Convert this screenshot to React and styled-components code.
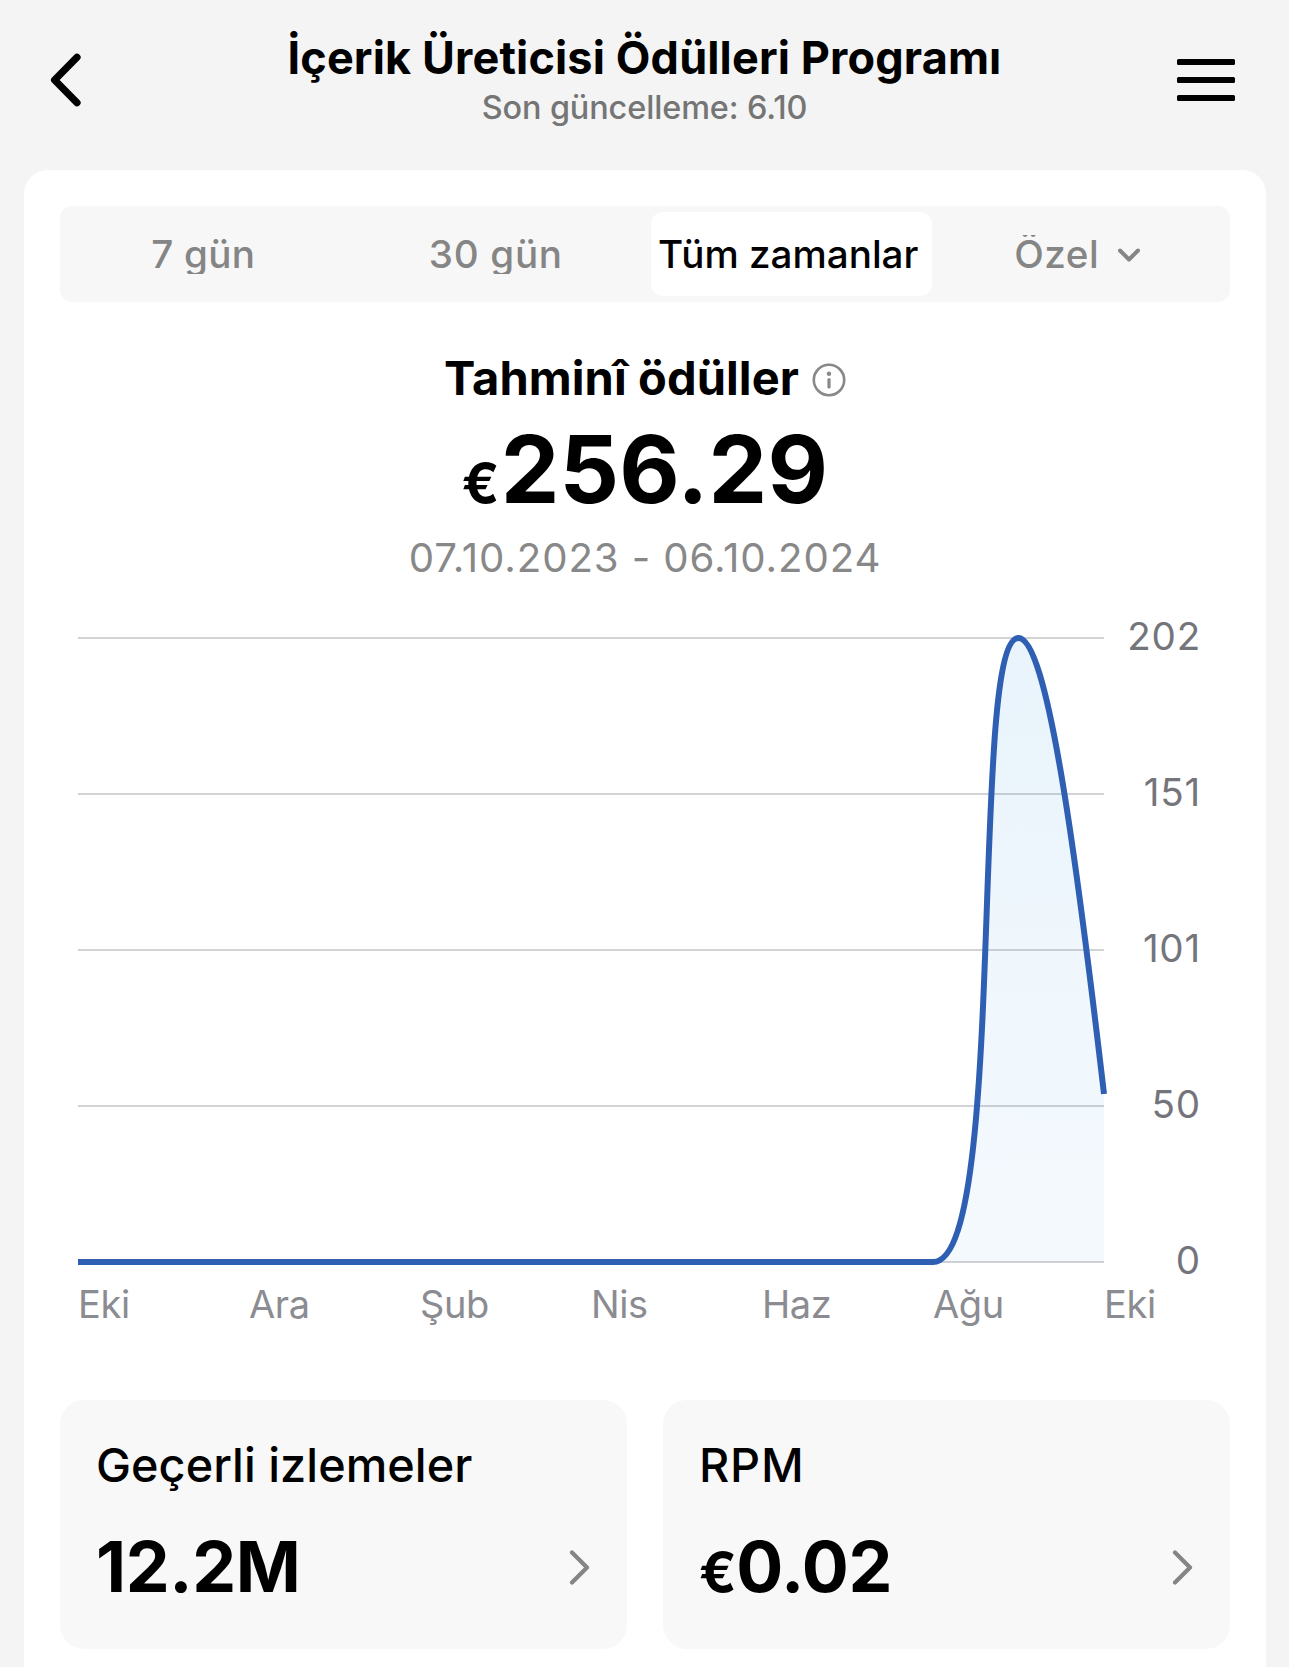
import React from "react";
import styled, { createGlobalStyle } from "styled-components";

const Global = createGlobalStyle`
  * { box-sizing: border-box; }
  body {
    margin: 0;
    background: #f4f4f4;
    color: #000;
    font-family: Inter, "Liberation Sans", sans-serif;
  }
`;

const Screen = styled.div`
  display: flex;
  flex-direction: column;
  width: 1289px;
  height: 1667px;
  overflow: hidden;
`;

const Header = styled.header`
  display: grid;
  grid-template-columns: 112px 1fr 112px;
  flex: none;
  height: 170px;
`;

const IconButton = styled.button`
  display: flex;
  align-items: flex-start;
  justify-content: ${(p) => (p.$end ? "flex-end" : "flex-start")};
  padding: 52px ${(p) => (p.$end ? "53px 0 0" : "0 0 48px")};
  border: 0;
  background: none;
  svg { flex: none; }
`;

const Heading = styled.div`
  padding-top: 32px;
  text-align: center;
  white-space: nowrap;
`;

const Title = styled.h1`
  margin: 0 0 5px;
  font-size: 45px;
  line-height: 52px;
  font-weight: 700;
  letter-spacing: 0.14px;
`;

const Updated = styled.p`
  margin: 0;
  color: #757575;
  font-size: 32.4px;
  line-height: 38px;
  font-weight: 500;
  letter-spacing: -0.1px;
`;

const Panel = styled.main`
  flex: 1;
  margin: 0 23px 0 24px;
  padding: 36px 36px 0;
  border-radius: 24px 24px 0 0;
  background: #fff;
`;

const Tabs = styled.nav`
  display: grid;
  grid-template-columns: repeat(4, 1fr);
  height: 96px;
  border-radius: 12px;
  background: #f7f7f7;
`;

const Tab = styled.button`
  display: flex;
  align-items: center;
  justify-content: center;
  gap: 18px;
  margin: 6px;
  padding: 1px ${(p) => p.$inset || 6}px 0 0;
  border: 0;
  border-radius: 12px;
  background: ${(p) => (p.$active ? "#fff" : "transparent")};
  color: ${(p) => (p.$active ? "#000" : "#858585")};
  font-family: inherit;
  font-size: 38.6px;
  font-weight: 500;
  letter-spacing: ${(p) => p.$spacing}px;
  white-space: nowrap;
`;

const TabLabel = styled.span`
  height: 39px;
  line-height: 39px;
  overflow: hidden;
`;

const Summary = styled.section`
  display: flex;
  flex-direction: column;
  align-items: center;
  padding-top: 48px;
`;

const SummaryTitle = styled.h2`
  display: flex;
  align-items: center;
  gap: 13px;
  margin: 0 0 13px;
  font-size: 47px;
  line-height: 56px;
  font-weight: 700;
  letter-spacing: 0.1px;
  svg { margin-top: 4px; }
`;

const Amount = styled.div`
  display: flex;
  align-items: baseline;
  font-size: 93.2px;
  line-height: 100px;
  font-weight: 700;
  letter-spacing: 0.2px;
`;

const Currency = styled.span`
  margin-right: ${(p) => p.$gap}px;
  font-size: 55px;
  line-height: 1;
`;

const Period = styled.p`
  margin: 15px 0 0;
  color: #888;
  font-size: 40.2px;
  line-height: 48px;
  letter-spacing: 0.9px;
`;

const Chart = styled.figure`
  margin: 34px 0 0;
  padding-left: 18px;
`;

const Plot = styled.div`
  display: flex;
  justify-content: space-between;
  height: 664px;
  padding-right: 29px;
  svg { flex: none; margin-top: 14px; }
`;

const Values = styled.div`
  display: flex;
  flex-direction: column;
  justify-content: space-between;
  color: #74757b;
  font-size: 38.6px;
  line-height: 40px;
  letter-spacing: 0.8px;
  text-align: right;
`;

const Months = styled.div`
  display: grid;
  grid-template-columns: repeat(6, 171px) auto;
  margin-top: 2px;
  color: #8b8c91;
  font-size: 38px;
  line-height: 44px;
  letter-spacing: -0.4px;
`;

const Cards = styled.section`
  display: grid;
  grid-template-columns: 1fr 1fr;
  gap: 36px;
  margin-top: 74px;
`;

const Card = styled.article`
  height: 249px;
  padding: 37px 36px 0;
  border-radius: 24px;
  background: #f8f8f8;
`;

const CardTitle = styled.h3`
  margin: 0 0 34px;
  font-size: 46.8px;
  line-height: 56px;
  font-weight: 500;
  letter-spacing: ${(p) => p.$spacing}px;
`;

const CardRow = styled.div`
  display: flex;
  align-items: center;
  justify-content: space-between;
`;

const CardValue = styled.div`
  display: flex;
  align-items: baseline;
  font-size: 69.8px;
  line-height: 80px;
  font-weight: 700;
  letter-spacing: -0.4px;
`;

const TABS = [
  { label: "7 gün", spacing: 0.3 },
  { label: "30 gün", spacing: 0.7 },
  { label: "Tüm zamanlar", spacing: 0 },
  { label: "Özel", spacing: 0.5, inset: 12, menu: true },
];
const ACTIVE_TAB = "Tüm zamanlar";

const CARDS = [
  { title: "Geçerli izlemeler", value: "12.2M", spacing: 0.05 },
  { title: "RPM", currency: "€", value: "0.02", spacing: 0.8 },
];

const VALUES = [202, 151, 101, 50, 0];
const MONTHS = ["Eki", "Ara", "Şub", "Nis", "Haz", "Ağu", "Eki"];
const GRID_Y = [8, 164, 320, 476, 632];

// Monthly curve: flat until August, peak in September, partial October.
const CURVE = "M0 632H855C930 632 891 8 940.5 8C969 8 997.5 220 1026 464";

const BackIcon = () => (
  <svg width="36" height="56" viewBox="0 0 36 56" fill="none">
    <path d="M29 5.2L6.6 28L29 50.8" stroke="#000" strokeWidth="7.2" strokeLinecap="round" strokeLinejoin="round" />
  </svg>
);

const MenuIcon = () => (
  <svg width="60" height="56" viewBox="0 0 60 56">
    <rect x="1" y="7" width="58" height="6" rx="1.5" />
    <rect x="1" y="25" width="58" height="6" rx="1.5" />
    <rect x="1" y="43" width="58" height="6" rx="1.5" />
  </svg>
);

const DownIcon = () => (
  <svg width="24" height="16" viewBox="0 0 24 16" fill="none">
    <path d="M3 3.5L12 12.5L21 3.5" stroke="#858585" strokeWidth="4" strokeLinecap="round" strokeLinejoin="round" />
  </svg>
);

const InfoIcon = () => (
  <svg width="34" height="34" viewBox="0 0 34 34" fill="none">
    <circle cx="17" cy="17" r="15.2" stroke="#888" strokeWidth="2.6" />
    <circle cx="17" cy="10.8" r="2.2" fill="#888" />
    <path d="M17 16.5V24" stroke="#888" strokeWidth="3.2" strokeLinecap="round" />
  </svg>
);

const NextIcon = () => (
  <svg width="22" height="36" viewBox="0 0 22 36" fill="none">
    <path d="M3 3.5L18 18.5L3 33.5" stroke="#858585" strokeWidth="4.2" strokeLinecap="round" strokeLinejoin="round" />
  </svg>
);

const CurveChart = () => (
  <svg width="1032" height="640" viewBox="0 0 1032 640" fill="none">
    <defs>
      <linearGradient id="area" x1="0" y1="8" x2="0" y2="632" gradientUnits="userSpaceOnUse">
        <stop offset="0" stopColor="#1e8cdc" stopOpacity="0.1" />
        <stop offset="1" stopColor="#3c9be1" stopOpacity="0.055" />
      </linearGradient>
    </defs>
    {GRID_Y.map((y) => (
      <path key={y} d={`M0 ${y}H1026`} stroke="#d2d3d5" strokeWidth="2" />
    ))}
    <path d={`${CURVE}V632Z`} fill="url(#area)" />
    <path d={CURVE} stroke="#2f5fb3" strokeWidth="6" />
  </svg>
);

export default function App() {
  return (
    <Screen>
      <Global />
      <Header>
        <IconButton aria-label="Geri"><BackIcon /></IconButton>
        <Heading>
          <Title>İçerik Üreticisi Ödülleri Programı</Title>
          <Updated>Son güncelleme: 6.10</Updated>
        </Heading>
        <IconButton $end aria-label="Menü"><MenuIcon /></IconButton>
      </Header>
      <Panel>
        <Tabs>
          {TABS.map((tab) => (
            <Tab key={tab.label} $active={tab.label === ACTIVE_TAB} $spacing={tab.spacing} $inset={tab.inset}>
              <TabLabel>{tab.label}</TabLabel>
              {tab.menu && <DownIcon />}
            </Tab>
          ))}
        </Tabs>
        <Summary>
          <SummaryTitle>Tahminî ödüller<InfoIcon /></SummaryTitle>
          <Amount><Currency $gap={1}>€</Currency>256.29</Amount>
          <Period>07.10.2023 - 06.10.2024</Period>
        </Summary>
        <Chart>
          <Plot>
            <CurveChart />
            <Values>{VALUES.map((v) => <span key={v}>{v}</span>)}</Values>
          </Plot>
          <Months>{MONTHS.map((m, i) => <span key={i}>{m}</span>)}</Months>
        </Chart>
        <Cards>
          {CARDS.map((card) => (
            <Card key={card.title}>
              <CardTitle $spacing={card.spacing}>{card.title}</CardTitle>
              <CardRow>
                <CardValue>
                  {card.currency && <Currency $gap={0}>{card.currency}</Currency>}
                  {card.value}
                </CardValue>
                <NextIcon />
              </CardRow>
            </Card>
          ))}
        </Cards>
      </Panel>
    </Screen>
  );
}
